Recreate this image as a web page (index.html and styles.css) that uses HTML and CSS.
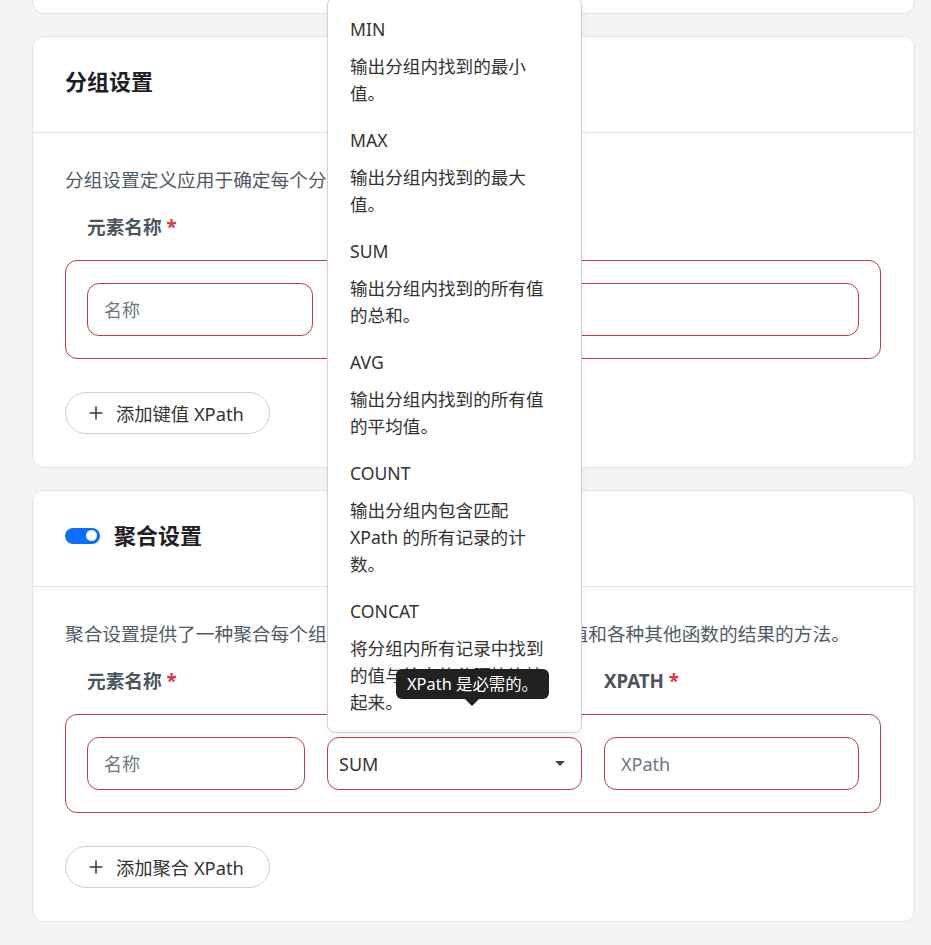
FILE: index.html
```html
<!DOCTYPE html>
<html lang="zh-CN">
<head>
    <meta charset="UTF-8">
    <meta name="viewport" content="width=device-width, initial-scale=1.0">
    <title>分组与聚合设置</title>
    <link rel="stylesheet" href="styles.css">
</head>
<body>
    <div class="page">
        <div class="card card-stub"></div>

        <!-- 分组设置 -->
        <section class="card">
            <header class="card-head">
                <h2>分组设置</h2>
            </header>
            <div class="card-body">
                <p class="desc">分组设置定义应用于确定每个分组的键值 XPath 表达式。</p>
                <div class="labels cols-group">
                    <span class="label">元素名称 <em>*</em></span>
                    <span class="label">XPATH <em>*</em></span>
                </div>
                <div class="field-group cols-group">
                    <input type="text" placeholder="名称">
                    <input type="text" placeholder="XPath">
                </div>
                <button class="btn-add" type="button">
                    <svg width="16" height="16" viewBox="0 0 16 16"><path d="M8 1.5v13M1.5 8h13" stroke="#333" stroke-width="1.5" fill="none"/></svg>
                    添加键值 XPath
                </button>
            </div>
        </section>

        <!-- 聚合设置 -->
        <section class="card">
            <header class="card-head">
                <span class="toggle"><span class="knob"></span></span>
                <h2>聚合设置</h2>
            </header>
            <div class="card-body">
                <p class="desc">聚合设置提供了一种聚合每个组内记录最小值、最大值、平均值和各种其他函数的结果的方法。</p>
                <div class="labels cols-agg">
                    <span class="label">元素名称 <em>*</em></span>
                    <span class="label">函数 <em>*</em></span>
                    <span class="label">XPATH <em>*</em></span>
                </div>
                <div class="field-group cols-agg">
                    <input type="text" placeholder="名称">
                    <div class="select-wrap">
                        <div class="select">SUM<span class="caret"></span></div>
                        <ul class="dropdown">
                            <li><div class="opt-title">MIN</div><div class="opt-desc">输出分组内找到的最小值。</div></li>
                            <li><div class="opt-title">MAX</div><div class="opt-desc">输出分组内找到的最大值。</div></li>
                            <li><div class="opt-title">SUM</div><div class="opt-desc">输出分组内找到的所有值的总和。</div></li>
                            <li><div class="opt-title">AVG</div><div class="opt-desc">输出分组内找到的所有值的平均值。</div></li>
                            <li><div class="opt-title">COUNT</div><div class="opt-desc">输出分组内包含匹配 XPath 的所有记录的计数。</div></li>
                            <li><div class="opt-title">CONCAT</div><div class="opt-desc">将分组内所有记录中找到的值与给定的分隔符连接起来。</div></li>
                        </ul>
                        <div class="tooltip">XPath 是必需的。</div>
                    </div>
                    <input type="text" placeholder="XPath">
                </div>
                <button class="btn-add" type="button">
                    <svg width="16" height="16" viewBox="0 0 16 16"><path d="M8 1.5v13M1.5 8h13" stroke="#333" stroke-width="1.5" fill="none"/></svg>
                    添加聚合 XPath
                </button>
            </div>
        </section>
    </div>
</body>
</html>
```

FILE: styles.css
```css
body {
    margin: 0;
    background-color: #f3f4f6;
    font-family: "Noto Sans", "Noto Sans CJK SC", sans-serif;
    color: #333;
}

.page {
    display: flex;
    flex-direction: column;
    gap: 22px;
    padding: 0 16px 40px 32px;
}

.card {
    background-color: #fff;
    border: 1px solid #e1e4e8;
    border-radius: 12px;
}

.card-stub {
    height: 13px;
    border-top: none;
    border-radius: 0 0 12px 12px;
}

.card-head {
    height: 96px;
    box-sizing: border-box;
    display: flex;
    align-items: center;
    gap: 14px;
    padding: 0 32px 8px;
    border-bottom: 1px solid #e1e4e8;
}

.card-head h2 {
    margin: 0;
    font-size: 22px;
    font-weight: 700;
    color: #1d2125;
    line-height: 30px;
}

.toggle {
    width: 35px;
    height: 16px;
    border-radius: 8px;
    background-color: #0d6efd;
    display: flex;
    align-items: center;
    justify-content: flex-end;
    padding: 0 3px;
    box-sizing: border-box;
    margin-top: 2px;
}

.knob {
    width: 11px;
    height: 11px;
    border-radius: 50%;
    background-color: #fff;
}

.card-body {
    padding: 33px 33px 33px 32px;
}

.desc {
    margin: 0 0 20px;
    font-size: 18.7px;
    line-height: 28px;
    color: #4f5b67;
    white-space: nowrap;
    overflow: hidden;
}

.labels {
    padding: 0 22px;
    margin-bottom: 20px;
}

.label {
    font-size: 18.7px;
    font-weight: 700;
    line-height: 26px;
    color: #4a5560;
    white-space: nowrap;
}

.label em {
    font-style: normal;
    color: #dc3545;
}

.cols-group {
    display: grid;
    grid-template-columns: 226px 1fr;
    column-gap: 22px;
}

.cols-agg {
    display: grid;
    grid-template-columns: 218px 1fr 1fr;
    column-gap: 22px;
}

.field-group {
    border: 1px solid #b0413e;
    border-radius: 12px;
    padding: 22px 21px;
}

input[type="text"] {
    height: 53px;
    box-sizing: border-box;
    border: 1px solid #b0413e;
    border-radius: 12px;
    padding: 0 16px;
    font-family: inherit;
    font-size: 18px;
    color: #333;
    background: #fff;
    min-width: 0;
}

input::placeholder {
    color: #6b7785;
}

.select-wrap {
    position: relative;
}

.select {
    height: 53px;
    box-sizing: border-box;
    border: 1px solid #b0413e;
    border-radius: 12px;
    padding: 0 11px;
    display: flex;
    align-items: center;
    justify-content: space-between;
    font-size: 18px;
    color: #333;
}

.caret {
    width: 0;
    height: 0;
    border-left: 5px solid transparent;
    border-right: 5px solid transparent;
    border-top: 5px solid #444;
    margin-right: 5px;
}

.dropdown {
    position: absolute;
    left: 0;
    right: 0;
    bottom: calc(100% + 4px);
    margin: 0;
    padding: 8px 0 6px;
    list-style: none;
    background: #fff;
    border: 1px solid #cfd3d7;
    border-radius: 8px;
    box-shadow: 0 2px 6px rgba(0, 0, 0, 0.06);
    z-index: 5;
}

.dropdown li {
    padding: 10px 22px;
    font-size: 17.6px;
    line-height: 27px;
    color: #333;
}

.opt-title {
    margin-bottom: 10px;
}

.tooltip {
    position: absolute;
    left: 69px;
    top: -68px;
    height: 30px;
    line-height: 30px;
    padding: 0 11px;
    background-color: #212121;
    color: #fff;
    border-radius: 6px;
    font-size: 16.4px;
    white-space: nowrap;
    z-index: 6;
}

.tooltip::after {
    content: "";
    position: absolute;
    left: 50%;
    top: 100%;
    margin-left: -7px;
    border-left: 7px solid transparent;
    border-right: 7px solid transparent;
    border-top: 7px solid #212121;
}

.btn-add {
    margin-top: 33px;
    height: 42px;
    display: inline-flex;
    align-items: center;
    gap: 12px;
    padding: 0 25px 0 22px;
    border: 1px solid #cdd1d6;
    border-radius: 21px;
    background: #fff;
    font-family: inherit;
    font-size: 18.3px;
    color: #333;
    cursor: pointer;
}
```
